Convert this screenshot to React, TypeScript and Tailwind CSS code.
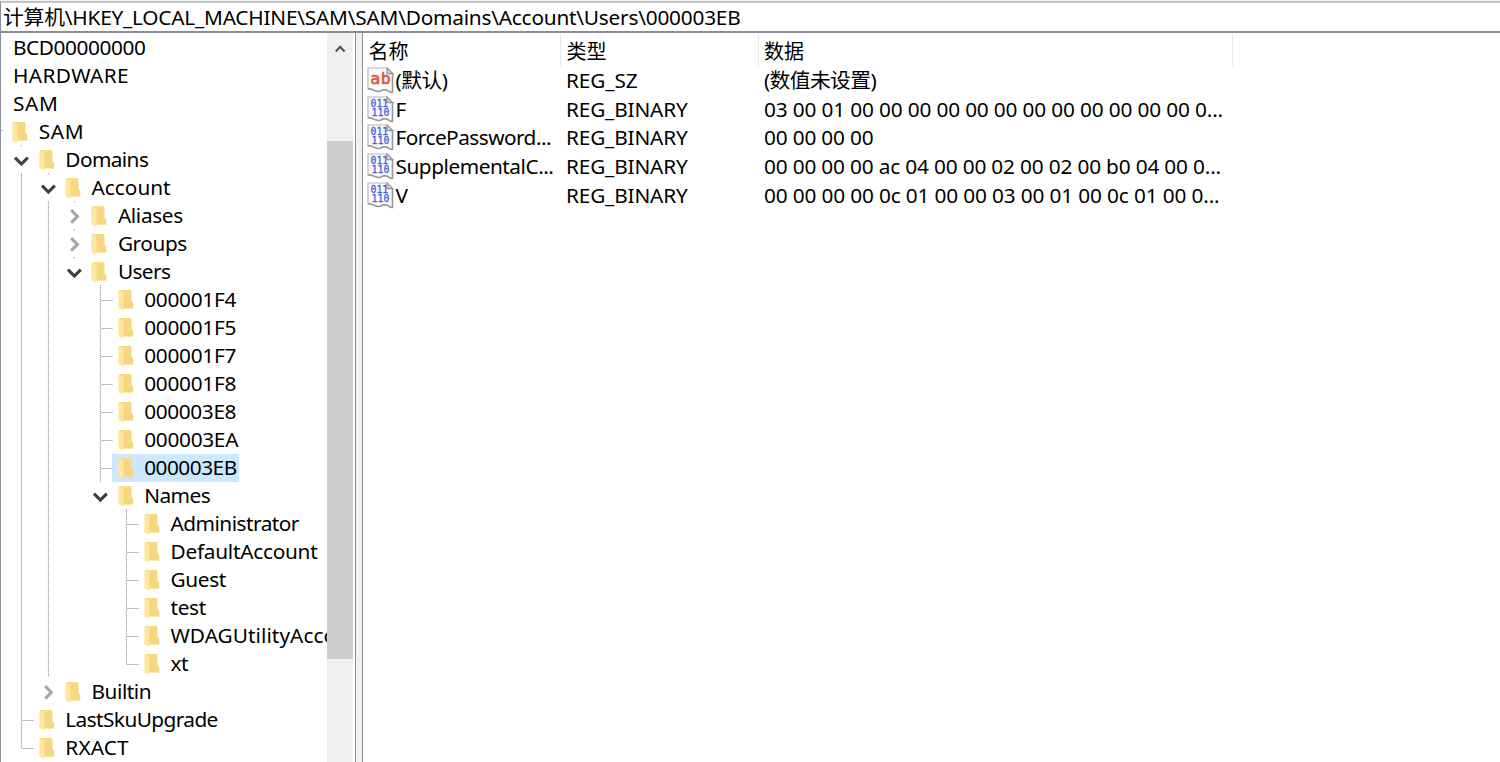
import React, { useLayoutEffect, useRef, useState } from "react";

type Cell = "line" | "tee" | "elbow" | "open" | "closed" | "closedLast" | "blank";

interface TreeItem {
  label: string;
  width: number;
  cells?: Cell[];
  folder?: boolean;
  selected?: boolean;
}

const tree: TreeItem[] = [
  { label: "BCD00000000", width: 132.5 },
  { label: "HARDWARE", width: 116 },
  { label: "SAM", width: 45.5 },
  { label: "SAM", width: 45.5, cells: [], folder: true },
  { label: "Domains", width: 83, cells: ["open"], folder: true },
  { label: "Account", width: 79, cells: ["line", "open"], folder: true },
  { label: "Aliases", width: 65, cells: ["line", "line", "closed"], folder: true },
  { label: "Groups", width: 69, cells: ["line", "line", "closed"], folder: true },
  { label: "Users", width: 52.5, cells: ["line", "line", "open"], folder: true },
  { label: "000001F4", width: 92, cells: ["line", "line", "blank", "tee"], folder: true },
  { label: "000001F5", width: 92, cells: ["line", "line", "blank", "tee"], folder: true },
  { label: "000001F7", width: 92, cells: ["line", "line", "blank", "tee"], folder: true },
  { label: "000001F8", width: 92, cells: ["line", "line", "blank", "tee"], folder: true },
  { label: "000003E8", width: 92, cells: ["line", "line", "blank", "tee"], folder: true },
  { label: "000003EA", width: 94, cells: ["line", "line", "blank", "tee"], folder: true },
  { label: "000003EB", width: 92.5, cells: ["line", "line", "blank", "tee"], folder: true, selected: true },
  { label: "Names", width: 66, cells: ["line", "line", "blank", "open"], folder: true },
  { label: "Administrator", width: 128.5, cells: ["line", "line", "blank", "blank", "tee"], folder: true },
  { label: "DefaultAccount", width: 147, cells: ["line", "line", "blank", "blank", "tee"], folder: true },
  { label: "Guest", width: 55.5, cells: ["line", "line", "blank", "blank", "tee"], folder: true },
  { label: "test", width: 35.5, cells: ["line", "line", "blank", "blank", "tee"], folder: true },
  { label: "WDAGUtilityAccount", width: 199, cells: ["line", "line", "blank", "blank", "tee"], folder: true },
  { label: "xt", width: 17.5, cells: ["line", "line", "blank", "blank", "elbow"], folder: true },
  { label: "Builtin", width: 59.5, cells: ["line", "closedLast"], folder: true },
  { label: "LastSkuUpgrade", width: 152.5, cells: ["tee"], folder: true },
  { label: "RXACT", width: 63.5, cells: ["elbow"], folder: true },
];

interface Value {
  kind: "sz" | "bin";
  name: string;
  nameWidth: number;
  type: string;
  typeWidth: number;
  data: string;
  dataWidth: number;
}

const values: Value[] = [
  { kind: "sz", name: "(默认)", nameWidth: 52, type: "REG_SZ", typeWidth: 71.5, data: "(数值未设置)", dataWidth: 112 },
  { kind: "bin", name: "F", nameWidth: 10.5, type: "REG_BINARY", typeWidth: 121.5, data: "03 00 01 00 00 00 00 00 00 00 00 00 00 00 00 0...", dataWidth: 459 },
  { kind: "bin", name: "ForcePassword...", nameWidth: 155.5, type: "REG_BINARY", typeWidth: 121.5, data: "00 00 00 00", dataWidth: 109.5 },
  { kind: "bin", name: "SupplementalC...", nameWidth: 158, type: "REG_BINARY", typeWidth: 121.5, data: "00 00 00 00 ac 04 00 00 02 00 02 00 b0 04 00 0...", dataWidth: 457 },
  { kind: "bin", name: "V", nameWidth: 13, type: "REG_BINARY", typeWidth: 121.5, data: "00 00 00 00 0c 01 00 00 03 00 01 00 0c 01 00 0...", dataWidth: 455.5 },
];

/* Text tracked so that its advance equals the given width. */
function Fit({ text, width }: { text: string; width: number }) {
  const ref = useRef<HTMLSpanElement>(null);
  const [tracking, setTracking] = useState(0);
  useLayoutEffect(() => {
    if (ref.current) {
      setTracking((width - ref.current.getBoundingClientRect().width) / text.length);
    }
  }, []);
  return (
    <span ref={ref} className="inline-block whitespace-pre" style={{ letterSpacing: `${tracking}px` }}>
      {text}
    </span>
  );
}

function Guide({ cell }: { cell: Cell }) {
  const dots = { stroke: "#9a9a9a", strokeWidth: 1, strokeDasharray: "1.3 0.7" };
  return (
    <svg className="h-7 w-[26.3px] shrink-0 overflow-visible" viewBox="0 0 26.3 28" fill="none">
      {(cell === "line" || cell === "tee") && <path d="M13.4 -1V27" {...dots} />}
      {cell === "elbow" && <path d="M13.4 -1V14.5" {...dots} />}
      {(cell === "tee" || cell === "elbow") && <path d="M14.2 14.5H26.2" {...dots} />}
      {(cell === "open" || cell === "closed") && <path d="M13.4 -1V0.3" stroke="#a8a8a8" />}
      {cell === "closed" && <path d="M13.4 27V28.3" stroke="#a8a8a8" />}
      {cell === "open" && <path d="M7 11.6L13.4 18L19.8 11.6" stroke="#404040" strokeWidth="3.1" />}
      {(cell === "closed" || cell === "closedLast") && (
        <path d="M10.2 8.2L16.4 14.4L10.2 20.6" stroke="#a6a6a6" strokeWidth="3.1" />
      )}
    </svg>
  );
}

function Folder() {
  return (
    <svg className="h-[23px] w-[16px] shrink-0" viewBox="0 0 16 23" fill="none">
      <path d="M0.8 0.9H13.4V12.2L15.2 13.4V19.4H4.5L0.8 17.5Z" fill="#f9db87" />
      <path d="M5.4 3.4H13.4V12.2L15.2 13.4V19.4H5.4Z" fill="#f5d27c" opacity="0.55" />
      <path d="M0.5 1.2L5.4 3.6V22L0.5 19.4Z" fill="#ffe7a2" />
    </svg>
  );
}

function TreeRow({ item }: { item: TreeItem }) {
  if (!item.folder) {
    return (
      <div className="flex h-7 shrink-0 items-start pl-[12px] leading-[26px]">
        <Fit text={item.label} width={item.width} />
      </div>
    );
  }
  const root = item.cells!.length === 0;
  return (
    <div className={root ? "flex h-7 shrink-0 pl-[9.5px]" : "flex h-7 shrink-0 pl-[7.3px]"}>
      {item.cells!.map((cell, i) => (
        <Guide key={i} cell={cell} />
      ))}
      <div
        className={
          item.selected
            ? "-ml-[1.5px] -mt-[0.5px] flex h-7 items-start bg-[#cce8ff] pl-[5.7px] pr-[2.5px] pt-[0.5px] leading-[26px]"
            : root
              ? "flex h-7 items-start pl-[1.7px] leading-[26px]"
              : "flex h-7 items-start pl-[4.2px] leading-[26px]"
        }
      >
        <div className="pt-[3px]">
          <Folder />
        </div>
        <div className="pl-[10.5px]">
          <Fit text={item.label} width={item.width} />
        </div>
      </div>
    </div>
  );
}

function ValueIcon({ kind }: { kind: "sz" | "bin" }) {
  return (
    <svg className="h-[27px] w-[27px] shrink-0" viewBox="0 0 27 27">
      <path
        d="M1 1H20L25.5 6.5V25.5C22 25.5 21 22.5 17.5 22.8C14 23.2 13 25.3 10 24.3C6 23 5 21.8 1 21.8Z"
        fill="#fafafa"
        stroke="#b8b8b8"
        strokeWidth="1.2"
      />
      <path
        d="M25.5 6.5V25.5C22 25.5 21 22.5 17.5 22.8C14 23.2 13 25.3 10 24.3C6 23 5 21.8 1 21.8"
        fill="none"
        stroke="#989898"
        strokeWidth="1.5"
      />
      <path d="M20 1V6.5H25.5Z" fill="#e8e8e8" stroke="#989898" strokeWidth="1.3" />
      {kind === "sz" ? (
        <text x="3.2" y="17.2" textLength="20.5" fontSize="16.5" stroke="#d9573b" strokeWidth="0.6" fill="#d9573b" className="font-['DejaVu_Sans_Mono',monospace]">
          ab
        </text>
      ) : (
        <g fill="#4562d6" stroke="#4562d6" strokeWidth="0.3" fontSize="9.8" className="font-['DejaVu_Sans_Mono',monospace]">
          <text x="3.6" y="11.4" textLength="17.5">011</text>
          <text x="4.6" y="19.8" textLength="17.8">110</text>
        </g>
      )}
    </svg>
  );
}

export default function App() {
  return (
    <div className="flex h-[762px] w-[1500px] flex-col overflow-hidden bg-white font-['Noto_Sans','Noto_Sans_CJK_SC',sans-serif] text-[20.8px] text-black">
      <div className="flex h-[33px] shrink-0 flex-col border-t border-t-[#f0f0f0]">
        <div className="flex h-8 items-center border-y-2 border-l border-t-[#c4c6c5] border-b-[#8b8d94] border-l-[#8b8d94] pl-[2px] leading-7">
          <Fit text="计算机\HKEY_LOCAL_MACHINE\SAM\SAM\Domains\Account\Users\000003EB" width={737.5} />
        </div>
      </div>
      <div className="flex min-h-0 flex-1">
        <div className="flex w-[356px] shrink-0 border-x border-[#8b8d99]">
          <div className="relative flex w-[326px] shrink-0 flex-col overflow-hidden pt-px">
            {tree.map((item, i) => (
              <TreeRow key={i} item={item} />
            ))}
            <div className="absolute left-0 top-[97px] h-px w-[2px] bg-[#b4b4b4]" />
          </div>
          <div className="flex w-[26px] shrink-0 flex-col bg-[#f0f0f0]">
            <div className="flex h-[108px] justify-center pt-[10px]">
              <svg className="h-[11px] w-[12px]" viewBox="0 0 12 11" fill="none">
                <path d="M1.8 8.4L6.2 3.8L10.6 8.4" stroke="#555" strokeWidth="2.2" />
              </svg>
            </div>
            <div className="h-[518px] bg-[#cdcdcd]" />
          </div>
        </div>
        <div className="w-[6px] shrink-0 bg-[#f0f0f0]" />
        <div className="flex min-w-0 flex-1 flex-col border-l border-[#8b8d99]">
          <div className="flex h-[33px] shrink-0 pt-px text-[20px] leading-[35px]">
            <div className="w-[198px] border-r border-[#e8e8e8] pl-[5.5px]">名称</div>
            <div className="w-[197.5px] border-r border-[#e8e8e8] pl-[5.5px]">类型</div>
            <div className="w-[474.5px] border-r border-[#e8e8e8] pl-[5.5px]">数据</div>
          </div>
          {values.map((v) => (
            <div key={v.name} className="flex h-[28.8px] shrink-0 items-center leading-[27px]">
              <div className="flex w-[198px] items-center pl-[4px]">
                <ValueIcon kind={v.kind} />
                <div className="pl-[1.5px]">
                  <Fit text={v.name} width={v.nameWidth} />
                </div>
              </div>
              <div className="w-[197.5px] pl-[5px]">
                <Fit text={v.type} width={v.typeWidth} />
              </div>
              <div className="pl-[5.5px]">
                <Fit text={v.data} width={v.dataWidth} />
              </div>
            </div>
          ))}
        </div>
      </div>
    </div>
  );
}
